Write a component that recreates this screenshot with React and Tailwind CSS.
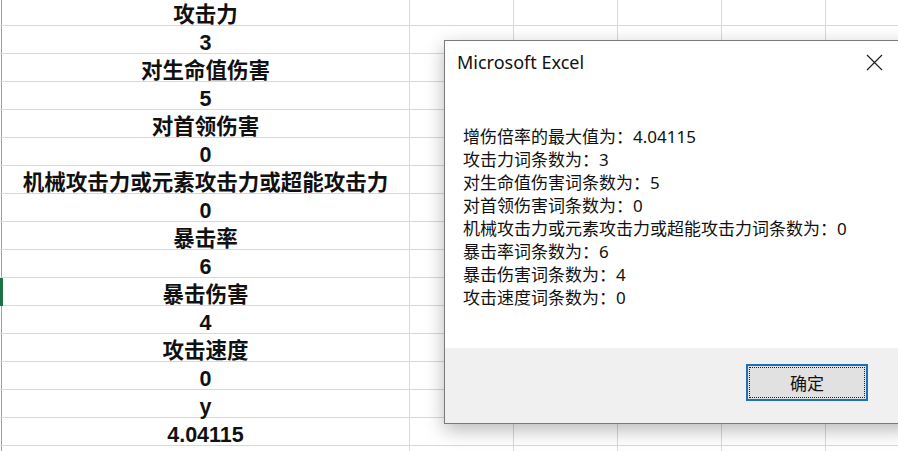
import React from "react";

const cells = [
  "攻击力",
  "3",
  "对生命值伤害",
  "5",
  "对首领伤害",
  "0",
  "机械攻击力或元素攻击力或超能攻击力",
  "0",
  "暴击率",
  "6",
  "暴击伤害",
  "4",
  "攻击速度",
  "0",
  "y",
  "4.04115",
  "",
];

const lines = [
  "增伤倍率的最大值为：4.04115",
  "攻击力词条数为：3",
  "对生命值伤害词条数为：5",
  "对首领伤害词条数为：0",
  "机械攻击力或元素攻击力或超能攻击力词条数为：0",
  "暴击率词条数为：6",
  "暴击伤害词条数为：4",
  "攻击速度词条数为：0",
];

export default function App() {
  return (
    <div className="relative w-[898px] h-[451px] overflow-hidden bg-white">
      <div className="flex flex-col -mt-[2px]">
        {cells.map((t, i) => (
          <div key={i} className="relative flex h-[28px] shrink-0 border-b border-[#d8d8d8]">
            {i === 10 && <div className="absolute left-0 top-0 h-[28px] w-[3px] bg-[#1e7145]" />}
            <div className="ml-px w-[409px] shrink-0 border-l border-r border-l-[#a0a0a0] border-r-[#d8d8d8] flex items-center justify-center pt-[9px] text-[21.5px] font-semibold leading-none text-[#111] [font-family:'Liberation_Sans','Noto_Sans_CJK_SC',sans-serif]">
              {t}
            </div>
            <div className="w-[104px] shrink-0 border-r border-[#d8d8d8]" />
            <div className="w-[104px] shrink-0 border-r border-[#d8d8d8]" />
            <div className="w-[104px] shrink-0 border-r border-[#d8d8d8]" />
            <div className="w-[104px] shrink-0 border-r border-[#d8d8d8]" />
            <div className="w-[104px] shrink-0 border-r border-[#d8d8d8]" />
          </div>
        ))}
      </div>

      <div className="absolute left-[444px] top-[40px] w-[470px] h-[384px] flex flex-col border border-[#7a7a7a] bg-white shadow-[0_6px_18px_rgba(0,0,0,0.28)]">
        <div className="flex h-[43px] items-center pl-[12px] pr-[30px] shrink-0">
          <span className="text-[18px] text-[#111] [font-family:'Noto_Sans','Open_Sans',sans-serif]">Microsoft Excel</span>
          <svg className="ml-auto" width="17" height="17" viewBox="0 0 17 17">
            <path d="M1 1 L16 16 M16 1 L1 16" stroke="#222" strokeWidth="1.2" fill="none" />
          </svg>
        </div>
        <div className="flex-1 pt-[41px] pl-[18px] flex flex-col text-[17px] leading-[23px] text-[#111] [font-family:'Noto_Sans','Noto_Sans_CJK_SC',sans-serif]">
          {lines.map((l, i) => (
            <div key={i} className="whitespace-nowrap">{l}</div>
          ))}
        </div>
        <div className="h-[75px] shrink-0 bg-[#f0f0f0] pl-[301px] pt-[16px]">
          <div className="w-[122px] h-[37px] border-2 border-[#1f6fb5] bg-[#e1e1e1] p-px">
            <div className="w-full h-full border border-dotted border-[#222] flex items-center justify-center text-[17px] text-[#111] [font-family:'Noto_Sans_CJK_SC',sans-serif]">
              确定
            </div>
          </div>
        </div>
      </div>
    </div>
  );
}
